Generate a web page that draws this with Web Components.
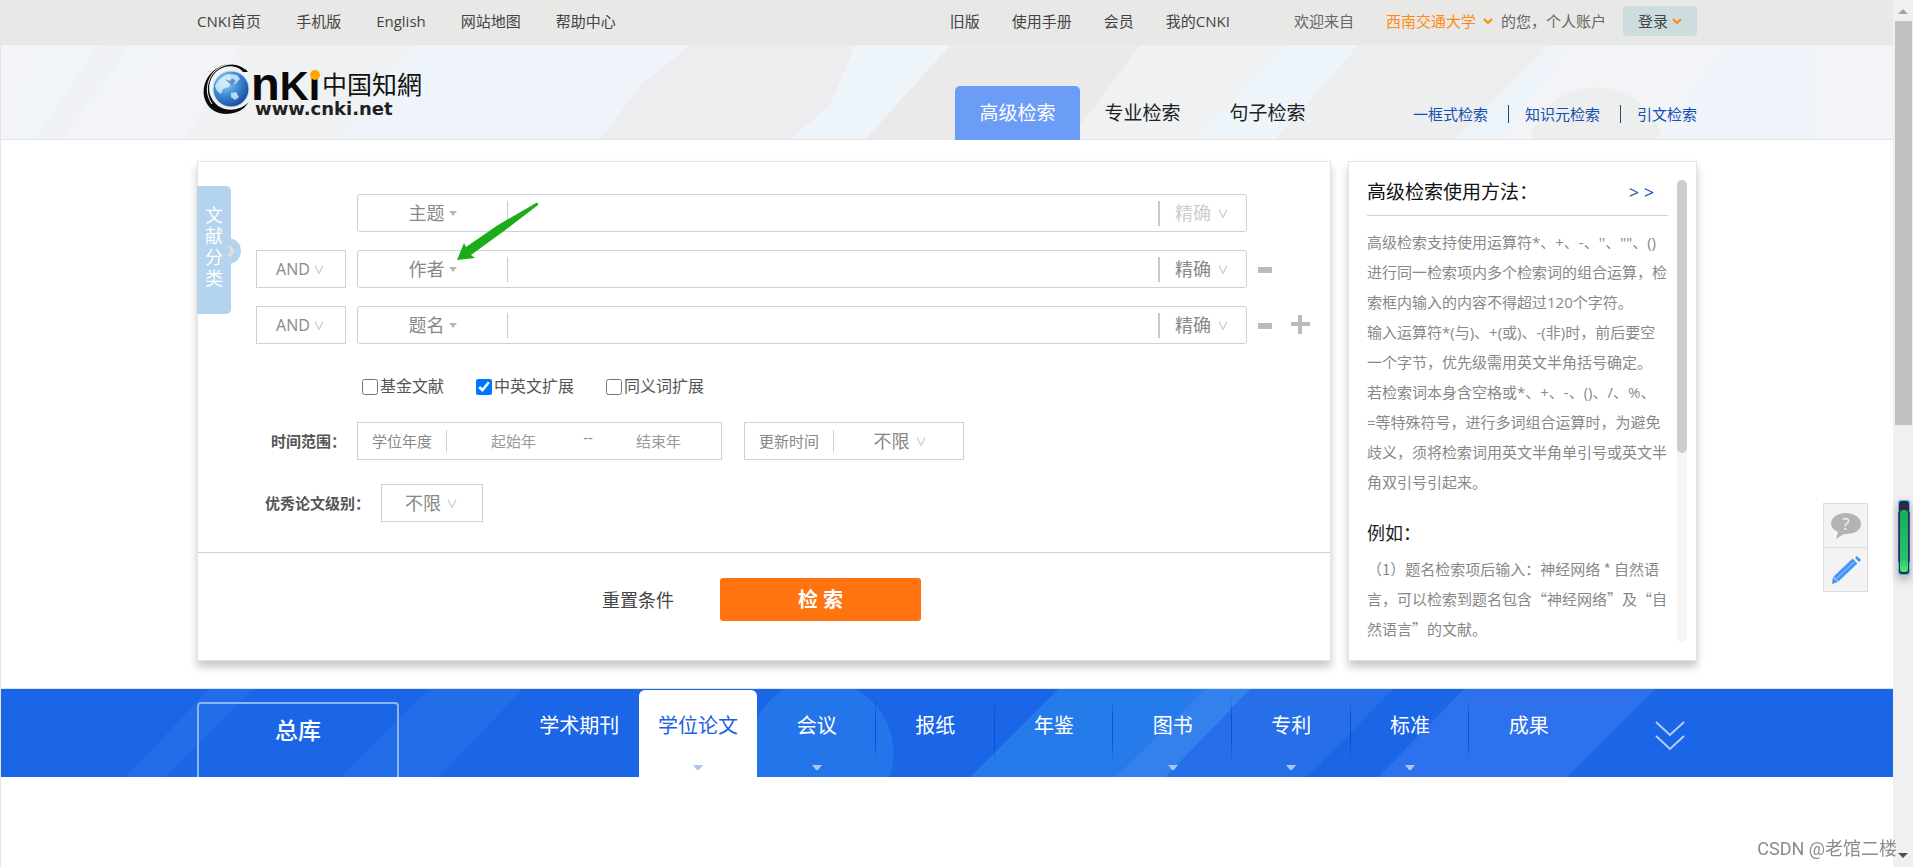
<!DOCTYPE html>
<html lang="zh-CN">
<head>
<meta charset="utf-8">
<title>高级检索 - 中国知网</title>
<style>
  body {
    margin: 0;
    height: 100vh;
    overflow: hidden;
    background: #fff;
    color: #333;
    font: 15px/20px "Open Sans", "Noto Sans CJK SC", sans-serif;
    text-spacing-trim: space-all;
  }
</style>
</head>
<body>
<cnki-app></cnki-app>
<script>
const define = (name, html, setup) => {
  const template = document.createElement('template');
  template.innerHTML = '<style>*{box-sizing:border-box}a{color:inherit;text-decoration:none}button,input,select{font:inherit;color:inherit;margin:0}button{border:0;background:none;padding:0}</style>' + html;
  customElements.define(name, class extends HTMLElement {
    constructor() {
      super();
      this.attachShadow({ mode: 'open' }).append(template.content.cloneNode(true));
    }
    connectedCallback() { if (setup) setup(this, this.shadowRoot); }
  });
};

define('page-scrollbar', `
<style>
  :host { display: flex; flex-direction: column; align-items: center; width: 20px; flex: none; background: #f0f0f0; }
  svg { display: block; width: 20px; height: 21px; flex: none; }
  .track { flex: 1; width: 17px; }
  .thumb { height: 49%; background: #c1c1c1; }
</style>
<svg viewBox="0 0 20 21"><path d="M10 9l5 5H5z" fill="#a3a3a3"/></svg>
<div class="track"><div class="thumb"></div></div>
<svg viewBox="0 0 20 21"><path d="M5 7h10l-5 5z" fill="#505050"/></svg>
`);

define('site-topbar', `
<style>
  :host { display: block; background: #e8e8e6; color: #444; }
  .in { max-width: 1500px; height: 45px; margin: 0 auto; display: flex; align-items: center; justify-content: space-between; padding-bottom: 3px; }
  nav { display: flex; gap: 35px; }
  .right { display: flex; align-items: center; }
  .right nav { gap: 32px; margin-right: 64px; }
  .user { display: flex; align-items: center; color: #666; }
  .org { color: #ff8a13; margin: 0 8px 0 32px; display: flex; align-items: center; gap: 7px; }
  .me { margin-right: 17px; }
  button { height: 30px; width: 74px; border-radius: 4px; background: #cddcdc; color: #444; display: flex; align-items: center; justify-content: center; gap: 4px; }
  svg { width: 10px; height: 7px; }
</style>
<div class="in">
  <nav><a href="#">CNKI首页</a><a href="#">手机版</a><a href="#">English</a><a href="#">网站地图</a><a href="#">帮助中心</a></nav>
  <div class="right">
    <nav><a href="#">旧版</a><a href="#">使用手册</a><a href="#">会员</a><a href="#">我的CNKI</a></nav>
    <div class="user">欢迎来自
      <a class="org" href="#">西南交通大学<svg viewBox="0 0 10 7"><path d="M1 1l4 4 4-4" fill="none" stroke="#ff8a13" stroke-width="2.2"/></svg></a>
      <span class="me">的您，个人账户</span>
      <button type="button">登录<svg viewBox="0 0 10 7"><path d="M1 1l4 4 4-4" fill="none" stroke="#ff8a13" stroke-width="2.2"/></svg></button>
    </div>
  </div>
</div>
`);

define('cnki-logo', `
<style>
  :host { display: block; width: 240px; height: 70px; }
  svg { display: block; }
</style>
<svg width="240" height="70" viewBox="0 0 240 70">
  <defs>
    <radialGradient id="globe" cx=".35" cy=".3" r=".8"><stop offset="0" stop-color="#a9d8f5"/><stop offset=".45" stop-color="#3f8fd2"/><stop offset="1" stop-color="#123f9c"/></radialGradient>
  </defs>
  <path d="M51 17C45 9 33 7 24 11C9 18 3 34 9 47C15 60 34 63 47 53L52 47C42 57 26 57 18 48C9 38 11 24 20 16C28 9 41 10 46 17z" fill="#0b0b0b"/>
  <path d="M48 14C40 7 27 7 17 17C7 29 10 42 15 49" fill="none" stroke="#fff" stroke-width="1"/>
  <circle cx="34" cy="34" r="18" fill="url(#globe)" stroke="#d4e8f5"/>
  <path d="M18 31c3-6 8-11 14-12l8 1 3 4-5 5-4-1-2 4-6 2-2 5-4-3zM34 38l5-1 3 5-4 3-4-3z" fill="#e5f5fc" opacity=".75"/>
  <path d="M28 24l5 2 2-3 4 3-4 4-3-2zM40 36l3 1-1 4z" fill="#4668b4" opacity=".7"/>
  <text x="54" y="45" fill="#080808" font-family="Liberation Sans, sans-serif" font-weight="700"><tspan font-size="47">n</tspan><tspan font-size="40">K</tspan><tspan font-size="43">ı</tspan></text>
  <circle cx="118" cy="20" r="5" fill="#ffa800"/>
  <text x="125" y="39" font-family="Noto Sans CJK SC, sans-serif" font-size="25" fill="#111">中国知網</text>
  <text x="58" y="60" font-family="DejaVu Sans, sans-serif" font-weight="700" font-size="18" fill="#222">www.cnki.net</text>
</svg>
`);

define('site-header', `
<style>
  :host { display: grid; background: #f2f4f7; border-bottom: 1px solid #e4e5e8; height: 95px; }
  .bg { grid-area: 1/1; width: 100%; height: 94px; display: block; }
  .in { grid-area: 1/1; width: 100%; max-width: 1500px; margin: 0 auto; height: 95px; display: flex; align-items: flex-end; z-index: 1; }
  cnki-logo { align-self: flex-start; margin-top: 10px; margin-right: auto; }
  .tabs { display: flex; margin-right: 83px; }
  .tabs a { width: 125px; height: 54px; line-height: 54px; text-align: center; font-size: 19px; color: #222; border-radius: 5px 5px 0 0; }
  .tabs a.on { background: #6c9df6; color: #fff; }
  .links { display: flex; color: #1450b0; height: 18px; line-height: 18px; margin-bottom: 17px; }
  .links a + a { border-left: 1px solid #2a4684; margin-left: 20px; padding-left: 16px; }
</style>
<svg class="bg" viewBox="0 0 1893 94" preserveAspectRatio="none">
  <path d="M38 0H155L50 94H10z" fill="#eff5f9"/>
  <path d="M98 0H130L60 94H35z" fill="#eff1f4"/>
  <path d="M240 0H415L340 94H185z" fill="#f0f1f3"/>
  <path d="M415 0H690L600 94H340z" fill="#eef4f9"/>
  <path d="M690 0H855L825 70L795 94H600L640 40z" fill="#ededef"/>
  <path d="M855 0H950L865 94H790L840 50z" fill="#eef5fa"/>
  <path d="M950 0H1140L1070 94H865z" fill="#ebeaea"/>
  <path d="M1140 0H1290L1195 94H1070z" fill="#f0f1f3"/>
  <path d="M1290 0H1358L1275 94H1195z" fill="#eef5fa"/>
  <path d="M1358 0H1550L1455 94H1275z" fill="#eceeef"/>
  <path d="M1550 0H1570L1500 94H1455z" fill="#edf4f9"/>
  <path d="M1530 94a68 68 0 01132 0z" fill="#edefef"/>
  <path d="M1726 0h91v94h-160z" fill="#eef4f9"/>
</svg>
<div class="in">
  <cnki-logo></cnki-logo>
  <nav class="tabs"><a class="on" href="#">高级检索</a><a href="#">专业检索</a><a href="#">句子检索</a></nav>
  <nav class="links"><a href="#">一框式检索</a><a href="#">知识元检索</a><a href="#">引文检索</a></nav>
</div>
`);

define('drop-down', `
<style>
  :host { display: grid; align-items: center; color: #888; font-size: 18px; }
  select { grid-area: 1/1; width: 100%; height: 100%; appearance: none; border: 0; background: none; outline: 0; text-align-last: center; padding: 0 var(--text-pad, 18px) 0 0; }
  svg { grid-area: 1/1; justify-self: end; margin-right: var(--icon-pad, 20px); pointer-events: none; display: block; }
</style>
<select><option></option></select>
<svg width="10" height="9" viewBox="0 0 10 9"></svg>
`, (host, root) => {
  const select = root.querySelector('select');
  select.options[0].textContent = host.getAttribute('value');
  select.setAttribute('aria-label', host.getAttribute('label'));
  root.querySelector('svg').innerHTML = host.hasAttribute('solid')
    ? '<path d="M1 2h8L5 7z" fill="#b8b8b8"/>'
    : '<path d="M1 .5l4 8 4-8" fill="none" stroke="#ccc" stroke-width="1.2"/>';
});

define('search-row', `
<style>
  :host { display: flex; height: 38px; }
  .logic { width: 90px; margin-right: 11px; flex: none; }
  .logic drop-down { height: 100%; border: 1px solid #cbd1dc; font-size: 16px; --text-pad: 16px; --icon-pad: 21px; }
  .box { flex: 1; min-width: 0; display: flex; align-items: center; border: 1px solid #cbd1dc; border-radius: 3px; }
  .field { width: 149px; height: 100%; flex: none; --text-pad: 12px; --icon-pad: 49px; }
  input { flex: 1; min-width: 0; height: 25px; border: 0; border-left: 1px solid #c6c9d0; border-right: 2px solid #c6c9cd; background: none; outline: 0; padding: 0 10px; }
  .mode { width: 86px; height: 100%; flex: none; --text-pad: 20px; --icon-pad: 18px; }
  .mode.off { color: #ccc; }
  .act { width: 83px; flex: none; display: flex; align-items: center; padding-left: 11px; gap: 19px; }
  svg { display: block; }
</style>
<div class="logic"></div>
<div class="box"></div>
<div class="act"></div>
`, (host, root) => {
  const field = host.getAttribute('field');
  const first = host.hasAttribute('first');
  root.querySelector('.logic').innerHTML = first ? '' : '<drop-down value="AND" label="逻辑关系"></drop-down>';
  root.querySelector('.box').innerHTML = `
    <drop-down class="field" solid value="${field}" label="检索项"></drop-down>
    <input type="text" aria-label="${field}">
    <drop-down class="mode${first ? ' off' : ''}" value="精确" label="匹配方式"></drop-down>`;
  let act = first ? '' : '<button type="button" aria-label="删除一行"><svg width="14" height="20"><path d="M0 8h14v6H0z" fill="#bbb"/></svg></button>';
  if (host.hasAttribute('add')) act += '<button type="button" aria-label="增加一行"><svg width="19" height="20"><path d="M0 9h19M9 0v19" stroke="#bbb" stroke-width="4" fill="none"/></svg></button>';
  root.querySelector('.act').innerHTML = act;
});

define('check-option', `
<style>
  :host { display: block; font-size: 16px; color: #555; }
  label { display: flex; align-items: center; }
  input { width: 16px; height: 16px; margin: 2px 2px 0 0; }
</style>
<label><input type="checkbox"><slot></slot></label>
`, (host, root) => { root.querySelector('input').checked = host.hasAttribute('checked'); });

define('category-tab', `
<style>
  :host { display: block; position: absolute; left: -1px; top: 24px; }
  button { display: flex; width: 34px; height: 128px; border-radius: 0 5px 5px 0; background: #b3d3ee; color: #fff; font-size: 18px; line-height: 21px; padding: 19px 8px 0; align-items: flex-start; }
  svg { position: absolute; left: 31px; top: 51px; }
</style>
<svg width="14" height="28" viewBox="0 0 14 28"><path d="M0 1a13 13 0 010 26z" fill="#b3d3ee"/><path d="M1 9l4 5-4 5" fill="none" stroke="#dedede" stroke-width="3"/></svg>
<button type="button">文献分类</button>
`);

define('search-form', `
<style>
  :host { display: block; position: relative; border: 1px solid #e3e3e3; background: #fff; box-shadow: 0 6px 8px rgba(0,0,0,.22); }
  .fields { padding: 32px 0 30px 58px; border-bottom: 1px solid #cdd3de; }
  .rows { display: grid; gap: 18px; }
  .checks { display: flex; gap: 32px; height: 20px; margin: 32px 0 26px 106px; }
  .line { display: flex; align-items: center; height: 38px; }
  .line + .line { margin-top: 24px; }
  .cap { width: 101px; padding-left: 15px; font-weight: 700; color: #555; flex: none; white-space: nowrap; }
  .cap.wide { width: 125px; padding-left: 9px; }
  .box { display: flex; align-items: center; height: 38px; border: 1px solid #cbd1dc; color: #888; }
  .name { height: 22px; line-height: 22px; padding: 0 14px; border-right: 1px solid #cbd1dc; white-space: nowrap; }
  .years { width: 365px; margin-right: 22px; }
  .years input { width: 133px; flex: none; border: 0; background: none; outline: 0; text-align: center; padding: 0; height: 30px; }
  .years input:last-child { width: auto; flex: 1; min-width: 0; }
  .years .to { width: 16px; text-align: center; align-self: flex-start; padding-top: 4px; }
  .years input::placeholder { color: #999; opacity: 1; }
  .update { width: 220px; }
  .update drop-down { flex: 1; height: 100%; --text-pad: 14px; --icon-pad: 37px; }
  .level { width: 102px; height: 38px; border: 1px solid #cbd1dc; --text-pad: 18px; --icon-pad: 25px; }
  .go { display: flex; align-items: center; justify-content: center; gap: 46px; padding: 25px 5px 39px 0; }
  .go button { font-size: 18px; color: #444; }
  .go .ok { width: 201px; height: 43px; border-radius: 3px; background: #ff7310; color: #fff; font-size: 20px; font-weight: 700; }
  .pointer { position: absolute; left: 258px; top: 40px; }
</style>
<category-tab></category-tab>
<form onsubmit="return false">
<div class="fields">
  <div class="rows">
    <search-row first field="主题"></search-row>
    <search-row field="作者"></search-row>
    <search-row field="题名" add></search-row>
  </div>
  <div class="checks">
    <check-option>基金文献</check-option><check-option checked>中英文扩展</check-option><check-option>同义词扩展</check-option>
  </div>
  <div class="line">
    <span class="cap">时间范围：</span>
    <div class="box years"><span class="name">学位年度</span><input type="text" placeholder="起始年" aria-label="起始年"><span class="to">--</span><input type="text" placeholder="结束年" aria-label="结束年"></div>
    <div class="box update"><span class="name">更新时间</span><drop-down value="不限" label="更新时间"></drop-down></div>
  </div>
  <div class="line">
    <span class="cap wide">优秀论文级别：</span>
    <drop-down class="level" value="不限" label="优秀论文级别"></drop-down>
  </div>
</div>
<div class="go"><button type="reset">重置条件</button><button class="ok" type="submit">检 索</button></div>
</form>
<svg class="pointer" width="84" height="64" viewBox="0 0 84 64"><path d="M82 1L80 1L42 23L10 45L8 41L1 58L19 56L15 53L48 29L82 3z" fill="#1aad19"/></svg>
`);

define('help-panel', `
<style>
  :host { display: flex; border: 1px solid #e3e3e3; background: #fff; box-shadow: 0 6px 8px rgba(0,0,0,.22); padding: 18px 3px 15px 18px; }
  .text { width: 301px; flex: none; color: #888; line-height: 30px; }
  header { display: flex; justify-content: space-between; height: 36px; line-height: 24px; border-bottom: 1px solid #d0d3da; margin-bottom: 11px; font-size: 19px; color: #111; padding-right: 14px; }
  header a { font-size: 18px; color: #1450b0; }
  h2, h3 { font: inherit; margin: 0; }
  h3 { font-size: 18px; color: #222; margin: 21px 0 6px; }
  p { margin: 0; }
  .keep { white-space: nowrap; }
  .ex { font-family: "Noto Sans CJK SC", sans-serif; }
  .bar { width: 10px; margin: 0 6px 3px auto; border-radius: 5px; background: #f5f5f5; }
  .thumb { height: 59%; border-radius: 5px; background: #ccc; }
</style>
<div class="text">
  <header><h2>高级检索使用方法：</h2><a href="#">&gt; &gt;</a></header>
  <p>高级检索支持使用运算符*、+、-、''、""、()进行同一检索项内多个检索词的组合运算，检索框内输入的内容不得超过120个字符。</p>
  <p>输入运算符*(与)、+(或)、-(非)时，前后要空一个字节，优先级需用英文半角括号确定。</p>
  <p>若检索词本身含空格或*、+、-、()、/、%、<span class="keep">=等特殊符号</span>，进行多词组合运算时，为避免歧义，须将检索词用英文半角单引号或英文半角双引号引起来。</p>
  <h3>例如：</h3>
  <p class="ex">（1）题名检索项后输入：神经网络 * 自然语言，可以检索到题名包含“神经网络”及“自然语言”的文献。</p>
</div>
<div class="bar"><div class="thumb"></div></div>
`);

define('db-nav', `
<style>
  :host { display: grid; height: 89px; border-top: 1px solid #dfe3ea; background: #1b66e6; color: #fff; }
  .bg { grid-area: 1/1; width: 100%; height: 88px; display: block; }
  .in { grid-area: 1/1; width: 100%; max-width: 1500px; margin: 0 auto; height: 88px; display: flex; align-items: flex-end; z-index: 1; }
  .all { width: 202px; height: 75px; border: 2px solid #8db4f4; border-bottom: 0; border-radius: 4px 4px 0 0; text-align: center; font-size: 23px; font-weight: 500; line-height: 52px; flex: none; margin-right: 121px; }
  .tabs { display: flex; flex: 1; height: 87px; }
  .tabs a { flex: 1; display: flex; flex-direction: column; align-items: center; font-size: 20px; line-height: 24px; padding-top: 24px; background: linear-gradient(transparent, #0b50d2 30%, #0b50d2 70%, transparent) right 8px / 1px 64px no-repeat; white-space: nowrap; }
  .tabs a.on { background: #fff; color: #1b5fe0; border-radius: 6px 6px 0 0; }
  .tabs a:last-child { background: none; }
  .tabs a:nth-child(1) { background: none; }
  .tabs svg { margin-top: 27px; display: block; }
  .more { width: 109px; height: 88px; flex: none; display: flex; align-items: flex-start; padding: 32px 0 0 67px; }
</style>
<svg class="bg" viewBox="0 0 1893 88" preserveAspectRatio="none">
  <path d="M208 0h44L165 88h-40z" fill="#236ee8"/>
  <path d="M428 0h94L438 88h-98z" fill="#236ee8"/>
  <circle cx="820" cy="64" r="73" fill="#2575ea"/>
  <path d="M1058 0h192L1165 88H970z" fill="#267bea"/>
  <path d="M1205 0h188L1307 88H1115z" fill="#266fe9"/>
  <path d="M1205 0h45L1165 88H1115z" fill="#3481ee"/>
  <path d="M1464 0h191L1567 88H1378z" fill="#2d72ec"/>
</svg>
<div class="in">
  <a class="all" href="#">总库</a>
  <nav class="tabs"></nav>
  <button class="more" type="button" aria-label="更多"><svg width="30" height="30" viewBox="0 0 30 30"><path d="M1 1l14 13L29 1M1 15l14 13L29 15" fill="none" stroke="#b5cdf7" stroke-width="2"/></svg></button>
</div>
`, (host, root) => {
  const caret = '<svg width="10" height="6" viewBox="0 0 10 6"><path d="M0 0h10L6 5H4z" fill="#a9c6f6"/></svg>';
  const items = [['学术期刊'], ['学位论文', 1], ['会议', 1], ['报纸'], ['年鉴'], ['图书', 1], ['专利', 1], ['标准', 1], ['成果']];
  root.querySelector('.tabs').innerHTML = items.map(([name, sub], i) =>
    `<a href="#"${i === 1 ? ' class="on"' : ''}>${name}${sub ? caret : ''}</a>`).join('');
});

define('float-tools', `
<style>
  :host { position: fixed; right: 45px; top: 503px; width: 45px; display: block; border: 1px solid #ddd; background: #f3f3f3; }
  button { display: block; width: 43px; height: 43px; }
  button + button { border-top: 1px solid #ddd; height: 44px; }
  svg { display: block; margin: auto; }
</style>
<button type="button" aria-label="帮助"><svg width="34" height="32" viewBox="0 0 34 32"><path d="M17 3c9 0 15 5 15 11s-6 10-15 10h-2l-8 5 2-7c-4-2-7-5-7-8C2 8 8 3 17 3z" fill="#b3b3b3"/><text x="17" y="20" text-anchor="middle" font-size="17" fill="#f3f3f3" font-family="Open Sans, sans-serif">?</text></svg></button>
<button type="button" aria-label="反馈"><svg width="32" height="32" viewBox="0 0 32 32"><path d="M6 25L25 7" stroke="#4795f8" stroke-width="7" fill="none"/><path d="M7 24L24 8" stroke="#a5cbfb" stroke-width="1" fill="none"/><path d="M3 23l5 5-6 2zM27 2l4 4-2 2-4-4z" fill="#4795f8"/></svg></button>
`);

define('level-meter', `
<style>
  :host { display: block; position: fixed; right: 3px; top: 500px; width: 12px; height: 75px; filter: drop-shadow(0 4px 5px rgba(0,0,0,.3)); }
  svg { display: block; }
</style>
<svg width="12" height="75" viewBox="0 0 12 75">
  <defs><linearGradient id="g" x2="0" y2="1"><stop offset="0" stop-color="#12b055"/><stop offset=".8" stop-color="#25c562"/><stop offset="1" stop-color="#55e87e"/></linearGradient></defs>
  <rect width="12" height="75" rx="3" fill="#52b8fa"/><rect y="12" width="12" height="50" fill="#4c42c8"/>
  <rect x="1" y="1" width="10" height="73" rx="3" fill="#2b2d3d"/>
  <rect x="2" y="10" width="8" height="62" rx="3" fill="url(#g)"/>
</svg>
`);

define('water-mark', `
<style>
  :host { display: block; position: fixed; right: 16px; bottom: 6px; font-size: 18px; line-height: 24px; color: #8c8c8c; text-shadow: 1px 1px 1px #fff; white-space: nowrap; font-family: Roboto, "Noto Sans CJK SC", sans-serif; }
</style>
<slot></slot>
`);

define('cnki-app', `
<style>
  :host { display: flex; height: 100%; }
  .page { flex: 1; min-width: 0; border-left: 1px solid #e6e6e6; }
  main { max-width: 1500px; margin: 21px auto 27px; display: grid; grid-template-columns: minmax(0, 1fr) 349px; gap: 17px; }
</style>
<div class="page">
  <site-topbar></site-topbar>
  <site-header></site-header>
  <main><search-form></search-form><help-panel></help-panel></main>
  <db-nav></db-nav>
</div>
<page-scrollbar></page-scrollbar>
<float-tools></float-tools>
<level-meter></level-meter>
<water-mark>CSDN @老馆二楼</water-mark>
`);
</script>
</body>
</html>
